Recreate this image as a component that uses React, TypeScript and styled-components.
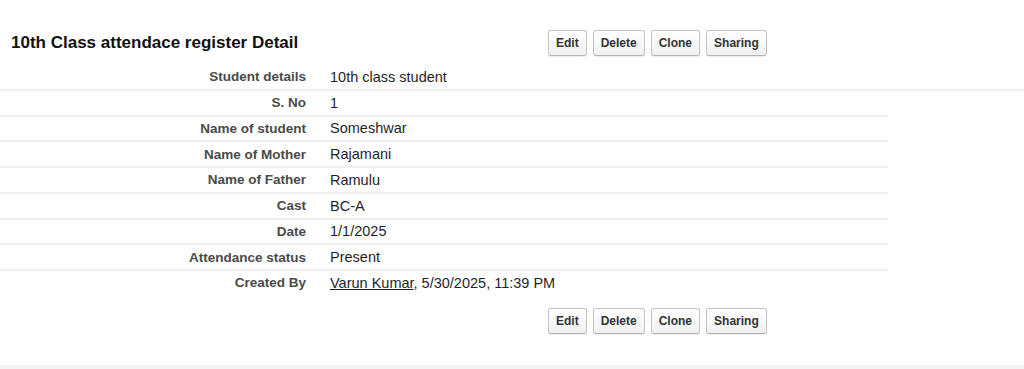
import styled, { createGlobalStyle } from "styled-components";

const GlobalStyle = createGlobalStyle`
	html, body {
		margin: 0;
		padding: 0;
		background: #ffffff;
	}
	body {
		font-family: "Liberation Sans", Arial, sans-serif;
	}
`;

const Page = styled.div`
	display: flex;
	flex-direction: column;
	height: 369px;
	box-sizing: border-box;
	padding-top: 30px;
	background: #ffffff;
`;

const Header = styled.div`
	display: flex;
	align-items: center;
	height: 26px;
	padding-left: 11px;
	margin-bottom: 9px;
`;

const Title = styled.h2`
	margin: 0;
	width: 537px;
	font-size: 17px;
	font-weight: bold;
	color: #111;
`;

const ButtonBar = styled.div<{ $indent?: number }>`
	display: flex;
	gap: 6px;
	padding-left: ${({ $indent }) => $indent ?? 0}px;
`;

const Button = styled.button`
	height: 26px;
	padding: 0 7px;
	font-family: "Liberation Sans", Arial, sans-serif;
	font-size: 12px;
	font-weight: bold;
	color: #333;
	background: linear-gradient(#ffffff, #f1f1f1);
	border: 1px solid #c5c5c5;
	border-bottom-color: #b5b5b5;
	border-radius: 3px;
	box-shadow: 0 1px 1px rgba(0, 0, 0, 0.08);
	cursor: pointer;
`;

const DetailTable = styled.div`
	display: flex;
	flex-direction: column;
`;

const Row = styled.div<{ $wide?: boolean; $last?: boolean }>`
	display: grid;
	grid-template-columns: 318px 1fr;
	align-items: center;
	box-sizing: border-box;
	height: 25.75px;
	width: ${({ $wide }) => ($wide ? "100%" : "888px")};
	border-bottom: 2px solid ${({ $last }) => ($last ? "transparent" : "#f0f0f0")};
`;

const Label = styled.div`
	text-align: right;
	padding-right: 12px;
	font-size: 13.5px;
	font-weight: bold;
	color: #4a4a4a;
`;

const Value = styled.div`
	padding-left: 12px;
	font-size: 14.5px;
	color: #1f1f1f;
`;

const UserLink = styled.a`
	color: #1f1f1f;
	text-decoration: underline;
`;

const BottomBar = styled.div`
	margin-top: 11px;
`;

const Footer = styled.div`
	margin-top: auto;
	height: 4px;
	background: #f5f5f5;
`;

const actions = ["Edit", "Delete", "Clone", "Sharing"];

const fields = [
	{ label: "S. No", value: "1" },
	{ label: "Name of student", value: "Someshwar" },
	{ label: "Name of Mother", value: "Rajamani" },
	{ label: "Name of Father", value: "Ramulu" },
	{ label: "Cast", value: "BC-A" },
	{ label: "Date", value: "1/1/2025" },
	{ label: "Attendance status", value: "Present" },
];

const Buttons = (props: { indent?: number }) => (
	<ButtonBar $indent={props.indent}>
		{actions.map((name) => (
			<Button key={name}>{name}</Button>
		))}
	</ButtonBar>
);

export default function App() {
	return (
		<>
			<GlobalStyle />
			<Page>
				<Header>
					<Title>10th Class attendace register Detail</Title>
					<Buttons />
				</Header>
				<DetailTable>
					<Row $wide>
						<Label>Student details</Label>
						<Value>10th class student</Value>
					</Row>
					{fields.map((f) => (
						<Row key={f.label}>
							<Label>{f.label}</Label>
							<Value>{f.value}</Value>
						</Row>
					))}
					<Row $last>
						<Label>Created By</Label>
						<Value>
							<UserLink href="#">Varun Kumar</UserLink>, 5/30/2025, 11:39 PM
						</Value>
					</Row>
				</DetailTable>
				<BottomBar>
					<Buttons indent={548} />
				</BottomBar>
				<Footer />
			</Page>
		</>
	);
}
